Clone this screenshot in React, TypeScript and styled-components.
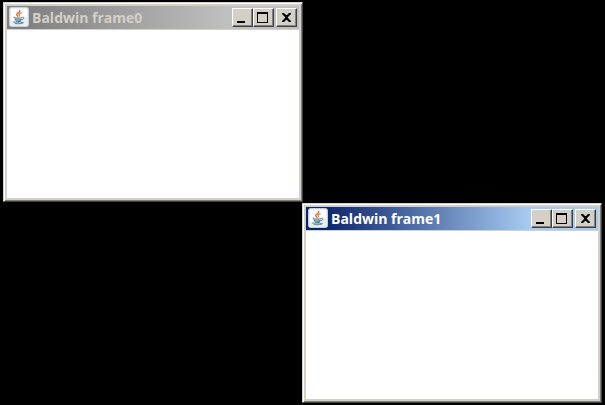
import React from "react";
import styled, { createGlobalStyle } from "styled-components";

const GlobalStyle = createGlobalStyle`
  * { box-sizing: border-box; }
  html, body { margin: 0; background: #000; }
`;

const Desktop = styled.main`
  position: relative;
  min-height: 100vh;
  overflow: hidden;
  background: #000;
`;

const Frame = styled.section<{ $x: number; $y: number }>`
  position: absolute;
  left: ${(p) => p.$x}px;
  top: ${(p) => p.$y}px;
  width: 300px;
  height: 200px;
  display: flex;
  flex-direction: column;
  padding: 3px;
  background: #d4d0c8;
  border: 1px solid;
  border-color: #d4d0c8 #404040 #404040 #d4d0c8;
  box-shadow: inset 1px 1px #fff, inset -1px -1px #808080;
`;

const TitleBar = styled.header<{ $active: boolean }>`
  display: flex;
  align-items: flex-start;
  height: 24px;
  padding: 1px 2px 0;
  border-bottom: 1px solid #d4d0c8;
  color: ${(p) => (p.$active ? "#fff" : "#d4d0c8")};
  background: ${(p) =>
    p.$active
      ? "linear-gradient(90deg, #0a246a 6%, #a6caf0 76%)"
      : "linear-gradient(90deg, #808080 6%, #c0c0c0 76%)"};
`;

const Title = styled.h1`
  flex: 1;
  margin: 0 0 0 3px;
  font: bold 14px/22px "Open Sans", "Noto Sans", sans-serif;
  white-space: nowrap;
`;

const Controls = styled.div`
  display: flex;
  padding-top: 1px;
`;

const ControlButton = styled.button<{ $apart?: boolean }>`
  display: block;
  width: 21px;
  height: 19px;
  margin: 0 0 0 ${(p) => (p.$apart ? 2 : 0)}px;
  padding: 0;
  border: 1px solid;
  border-color: #fff #404040 #404040 #fff;
  box-shadow: inset -1px -1px #808080;
  background: #d4d0c8;
  color: #000;
  svg { display: block; }
`;

const Client = styled.div`
  flex: 1;
  background: #fff;
`;

const JavaIcon = () => (
  <svg width="20" height="20" viewBox="0 0 20 20" aria-hidden="true">
    <rect x=".5" y=".5" width="19" height="19" rx="2" fill="#e9eef2" stroke="#c3d0dc" />
    <path d="M2 2h16v8L2 14Z" fill="#fff" />
    <g fill="none" strokeLinecap="round">
      <path d="M10.6 3.4c1.2 2-3.7 2.8-2.9 4.4.3.7 1.1.9 1.1 1.5" stroke="#df7135" strokeWidth="1.4" />
      <path d="M12.3 5.8c-2.2.6-3 1.3-2 2.2.5.6.2.9-.3 1.2" stroke="#e6853f" strokeWidth="1.2" />
      <path d="M5.6 10.2c-1.2.8 1.4 1 4 .9 1.5 0 2.4-.1 3.2-.3M6.2 12.2c.4 1 4.6.9 6.1.2M6.7 13.8c.8.8 3.9.7 5.1.1" stroke="#547c96" strokeWidth="1.1" />
      <path d="M13.4 10.2c2.3-.6 2.3 1.6-.1 2.4M5 14.5c-3 1.2 4.2 2.1 8.7.9M6.2 16.6c3 .4 7.3.2 8.3-.8" stroke="#6489a0" />
    </g>
  </svg>
);

const MinimizeIcon = () => (
  <svg width="19" height="17" aria-hidden="true"><path d="M4 12h8v2H4Z" /></svg>
);
const MaximizeIcon = () => (
  <svg width="19" height="17" aria-hidden="true">
    <path d="M3 3h11v11H3ZM4 5v8h9V5Z" fillRule="evenodd" />
  </svg>
);
const CloseIcon = () => (
  <svg width="19" height="17" aria-hidden="true">
    <path d="M5 4h2l2 2h1l2-2h2v1l-3 3v1l3 3v1h-2l-2-2H9l-2 2H5v-1l3-3V8L5 5Z" />
  </svg>
);

type WindowProps = { title: string; x: number; y: number; active?: boolean };

const JavaWindow = ({ title, x, y, active = false }: WindowProps) => (
  <Frame $x={x} $y={y} aria-label={title}>
    <TitleBar $active={active}>
      <JavaIcon />
      <Title>{title}</Title>
      <Controls>
        <ControlButton type="button" aria-label="Minimize"><MinimizeIcon /></ControlButton>
        <ControlButton type="button" aria-label="Maximize"><MaximizeIcon /></ControlButton>
        <ControlButton type="button" aria-label="Close" $apart><CloseIcon /></ControlButton>
      </Controls>
    </TitleBar>
    <Client />
  </Frame>
);

export default function App() {
  return (
    <>
      <GlobalStyle />
      <Desktop>
        <JavaWindow title="Baldwin frame0" x={3} y={2} />
        <JavaWindow title="Baldwin frame1" x={302} y={203} active />
      </Desktop>
    </>
  );
}
